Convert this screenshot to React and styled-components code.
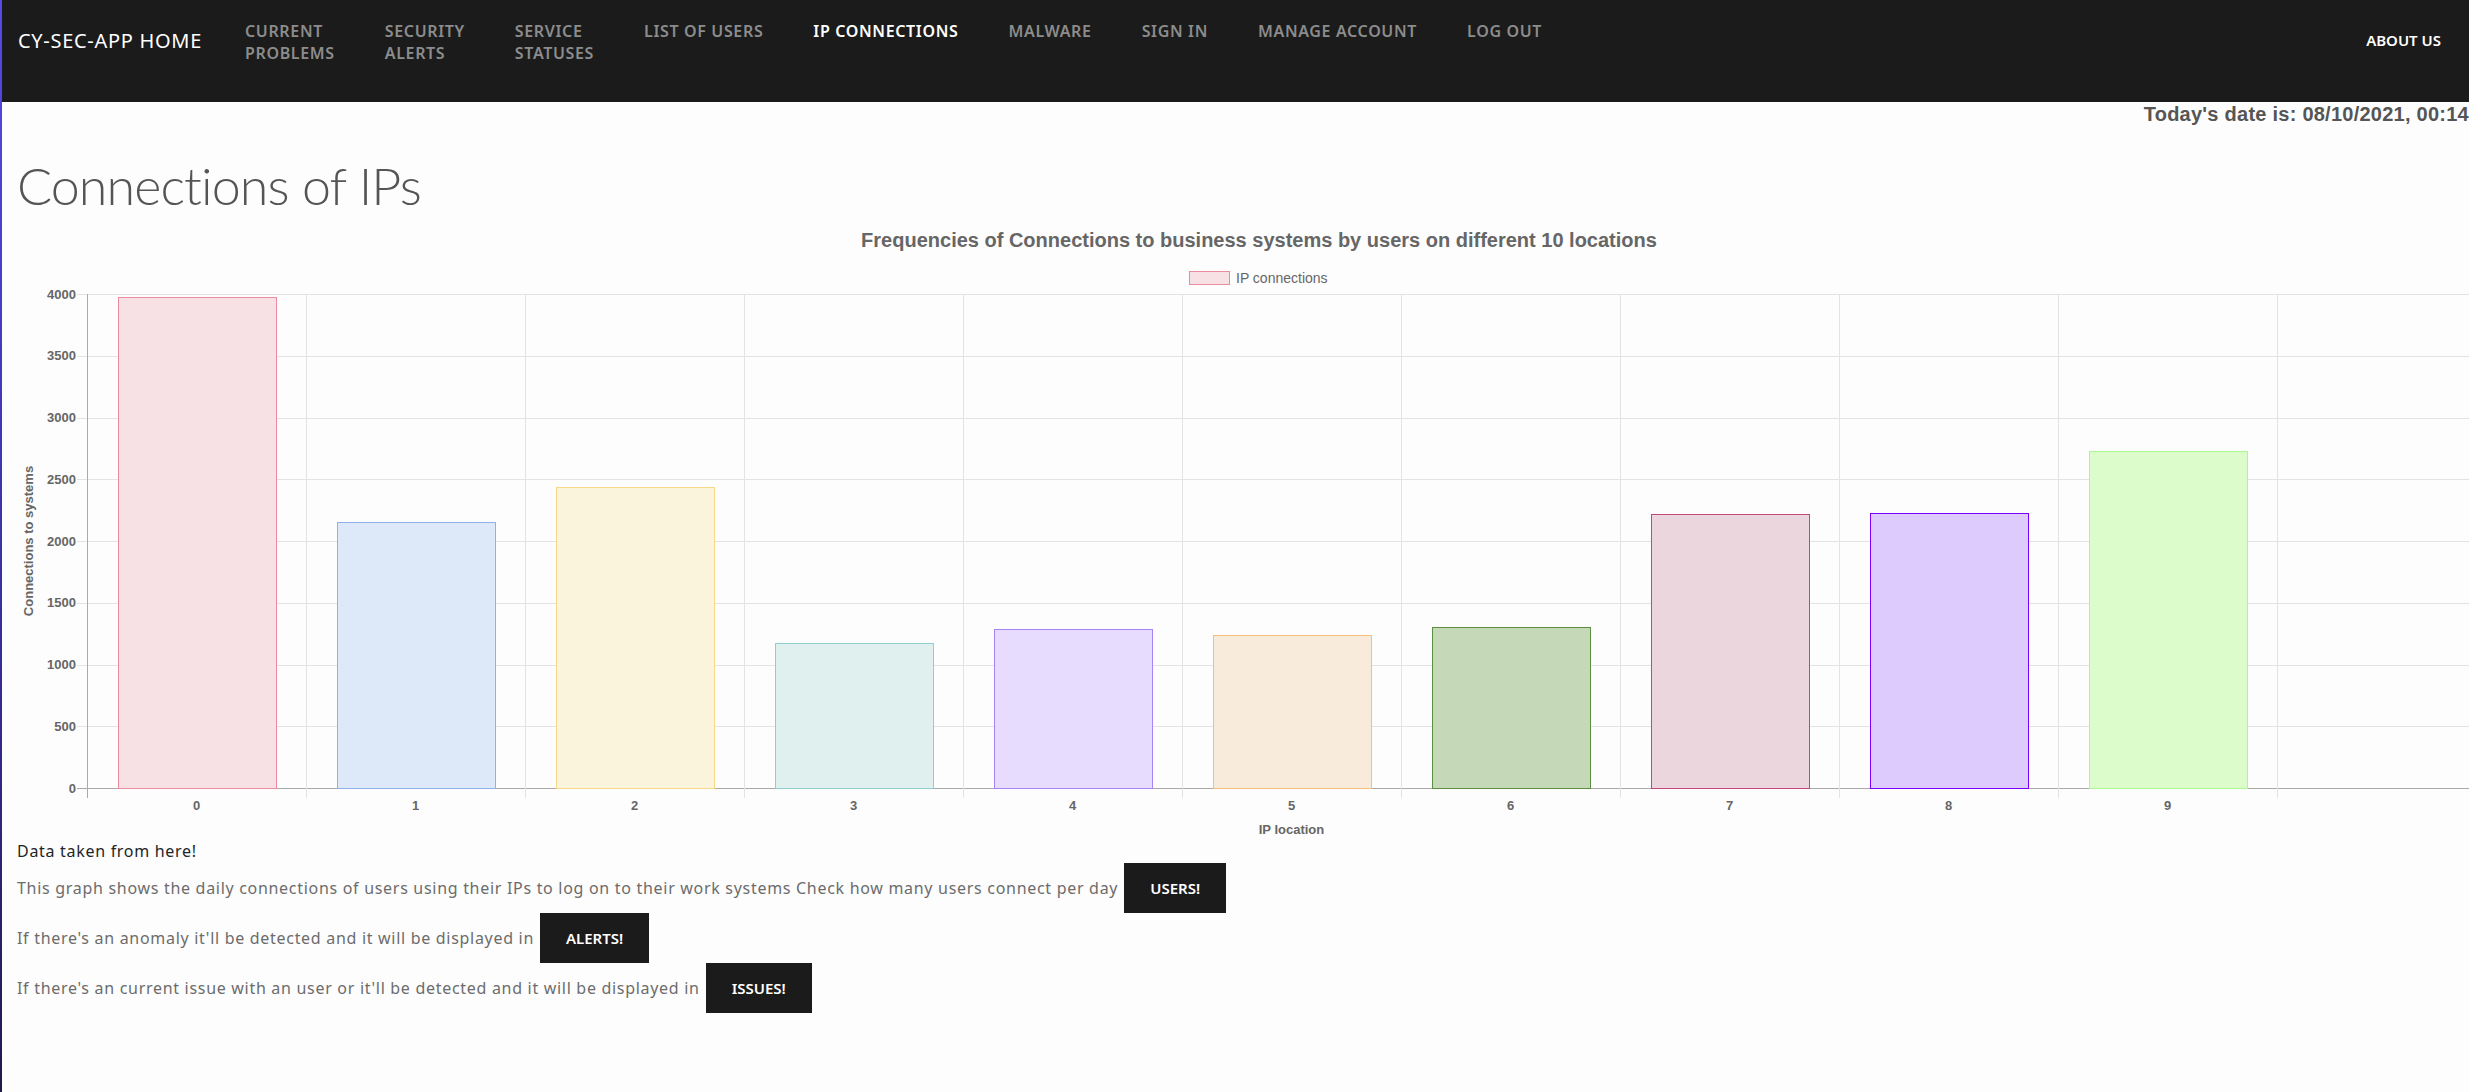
import React from "react";
import styled, { createGlobalStyle } from "styled-components";

const GlobalStyle = createGlobalStyle`
  html, body {
    margin: 0;
    padding: 0;
    background: #fdfdfd;
    overflow-x: hidden;
  }
  body {
    font-family: "Noto Sans", "Liberation Sans", sans-serif;
  }
`;

const Page = styled.div`
  min-height: 100vh;
  box-sizing: border-box;
  border-left: 2px solid #3b2fa8;
  border-image: linear-gradient(180deg, #5a48e8 0%, #3a2fa0 55%, #1d1a4c 100%) 1;
`;

const NavBar = styled.nav`
  display: flex;
  align-items: flex-start;
  height: 102px;
  box-sizing: border-box;
  padding: 0 28px 0 16px;
  background: #1b1b1b;
  font-family: "Noto Sans", "Liberation Sans", sans-serif;
`;

const Brand = styled.a`
  margin: 27px 18px 0 0;
  font-size: 20px;
  line-height: 28px;
  letter-spacing: 0.7px;
  color: #fff;
  white-space: nowrap;
  text-decoration: none;
`;

const NavList = styled.div`
  display: flex;
  align-items: flex-start;
`;

const NavItem = styled.a`
  padding: 0 25px;
  margin-top: 21px;
  font-size: 16px;
  font-weight: 600;
  line-height: 21.5px;
  letter-spacing: 0.65px;
  color: ${(p) => (p.$active ? "#fff" : "#8c8c8c")};
  white-space: nowrap;
  text-decoration: none;
`;

const AboutUs = styled.a`
  margin: 30px 0 0 auto;
  font-size: 15px;
  font-weight: 600;
  line-height: 21.5px;
  color: #fff;
  white-space: nowrap;
  text-decoration: none;
`;

const DateRow = styled.div`
  text-align: right;
  font-family: "Liberation Sans", Arial, sans-serif;
  font-weight: bold;
  font-size: 20px;
  line-height: 24px;
  letter-spacing: 0.25px;
  color: #555;
  white-space: nowrap;
`;

const Heading = styled.h1`
  margin: 28px 0 8px 15px;
  font-family: Lato, "Open Sans", sans-serif;
  font-weight: 300;
  font-size: 52px;
  line-height: 62px;
  letter-spacing: -0.9px;
  color: #555;
`;

const ChartSvg = styled.svg`
  display: block;
`;

const ChartTitle = styled.text`
  font: bold 20px "Liberation Sans", Arial, sans-serif;
  fill: #666;
`;

const LegendText = styled.text`
  font: 14px "Liberation Sans", Arial, sans-serif;
  fill: #666;
`;

const TickLabel = styled.text`
  font: bold 13px "Liberation Sans", Arial, sans-serif;
  fill: #666;
`;

const Info = styled.section`
  padding-left: 15px;
  font-family: "Noto Sans", "Liberation Sans", sans-serif;
  font-size: 16px;
  letter-spacing: 0.7px;
`;

const Source = styled.p`
  margin: 0;
  line-height: 24px;
  color: #212529;
`;

const InfoRow = styled.p`
  display: flex;
  align-items: center;
  gap: 6px;
  margin: 0;
  line-height: 24px;
  color: #6c6c6c;
`;

const ActionButton = styled.button`
  padding: 13px 26px;
  border: 0;
  border-radius: 0;
  background: #1b1b1b;
  color: #fff;
  font-family: "Noto Sans", "Liberation Sans", sans-serif;
  font-size: 15px;
  font-weight: 600;
  line-height: 24px;
  letter-spacing: 0;
  cursor: pointer;
`;

const navLinks = [
  ["CURRENT", "PROBLEMS"],
  ["SECURITY", "ALERTS"],
  ["SERVICE", "STATUSES"],
  ["LIST OF USERS"],
  ["IP CONNECTIONS"],
  ["MALWARE"],
  ["SIGN IN"],
  ["MANAGE ACCOUNT"],
  ["LOG OUT"],
];

const bars = [
  { value: 3975, fill: "#f7e1e5", stroke: "#ec8ba0" },
  { value: 2150, fill: "#dde8f8", stroke: "#8fb1ea" },
  { value: 2440, fill: "#fbf4dc", stroke: "#f6da8a" },
  { value: 1175, fill: "#dff0ef", stroke: "#8ccfcf" },
  { value: 1290, fill: "#e7dcfe", stroke: "#a684f4" },
  { value: 1240, fill: "#f9ebdb", stroke: "#f6bf78" },
  { value: 1300, fill: "#c5d8b7", stroke: "#5b8f3d" },
  { value: 2220, fill: "#ecd6de", stroke: "#c4487b" },
  { value: 2225, fill: "#ddcbfd", stroke: "#7a00ff" },
  { value: 2730, fill: "#dcfccb", stroke: "#a9f98f" },
];

// chart geometry, in svg pixels
const W = 2514;
const H = 615;
const left = 85;
const top = 70;
const bottom = 564;
const slot = 219;
const slots = 11;
const max = 4000;
const right = left + slot * slots;

const yOf = (v) => bottom - (v / max) * (bottom - top);

function BarChart() {
  const ticks = [0, 500, 1000, 1500, 2000, 2500, 3000, 3500, 4000];
  const barW = slot * 0.72;
  return (
    <ChartSvg width={W} height={H} viewBox={`0 0 ${W} ${H}`}>
      <ChartTitle x={W / 2} y={16} textAnchor="middle" dominantBaseline="central">
        Frequencies of Connections to business systems by users on different 10 locations
      </ChartTitle>
      <rect x={1187.5} y={47.5} width={40} height={13} fill="#f7e1e5" stroke="#ec8ba0" />
      <LegendText x={1234} y={54} dominantBaseline="central">
        IP connections
      </LegendText>

      {ticks.map((t) => (
        <g key={t}>
          <line
            x1={left - 10}
            x2={right}
            y1={Math.round(yOf(t)) + 0.5}
            y2={Math.round(yOf(t)) + 0.5}
            stroke={t === 0 ? "#a9a9a9" : "#e3e3e3"}
          />
          <TickLabel x={74} y={yOf(t)} textAnchor="end" dominantBaseline="central">
            {t}
          </TickLabel>
        </g>
      ))}

      {Array.from({ length: slots + 1 }).map((_, i) => (
        <line
          key={i}
          x1={left + i * slot + 0.5}
          x2={left + i * slot + 0.5}
          y1={top}
          y2={bottom + 10}
          stroke={i === 0 ? "#a9a9a9" : "#e3e3e3"}
        />
      ))}

      {bars.map((b, i) => {
        const x = left + i * slot + (slot - barW) / 2;
        const y = yOf(b.value);
        return (
          <rect
            key={i}
            x={Math.round(x) + 0.5}
            y={Math.round(y) + 0.5}
            width={Math.round(barW)}
            height={bottom - Math.round(y)}
            fill={b.fill}
            stroke={b.stroke}
          />
        );
      })}

      {bars.map((_, i) => (
        <TickLabel
          key={i}
          x={left + i * slot + slot / 2}
          y={581}
          textAnchor="middle"
          dominantBaseline="central"
        >
          {i}
        </TickLabel>
      ))}

      <TickLabel x={(left + right) / 2} y={605} textAnchor="middle" dominantBaseline="central">
        IP location
      </TickLabel>
      <TickLabel
        x={26}
        y={(top + bottom) / 2}
        textAnchor="middle"
        dominantBaseline="central"
        transform={`rotate(-90 26 ${(top + bottom) / 2})`}
      >
        Connections to systems
      </TickLabel>
    </ChartSvg>
  );
}

export default function App() {
  return (
    <Page>
      <GlobalStyle />
      <NavBar>
        <Brand href="#">CY-SEC-APP HOME</Brand>
        <NavList>
          {navLinks.map((lines) => (
            <NavItem key={lines.join(" ")} href="#" $active={lines[0] === "IP CONNECTIONS"}>
              {lines.map((l, i) => (
                <React.Fragment key={l}>
                  {i > 0 && <br />}
                  {l}
                </React.Fragment>
              ))}
            </NavItem>
          ))}
        </NavList>
        <AboutUs href="#">ABOUT US</AboutUs>
      </NavBar>

      <DateRow>Today's date is: 08/10/2021, 00:14</DateRow>
      <Heading>Connections of IPs</Heading>
      <BarChart />

      <Info>
        <Source>Data taken from here!</Source>
        <InfoRow>
          This graph shows the daily connections of users using their IPs to log on to their work
          systems Check how many users connect per day
          <ActionButton>USERS!</ActionButton>
        </InfoRow>
        <InfoRow>
          If there's an anomaly it'll be detected and it will be displayed in
          <ActionButton>ALERTS!</ActionButton>
        </InfoRow>
        <InfoRow>
          If there's an current issue with an user or it'll be detected and it will be displayed in
          <ActionButton>ISSUES!</ActionButton>
        </InfoRow>
      </Info>
    </Page>
  );
}
